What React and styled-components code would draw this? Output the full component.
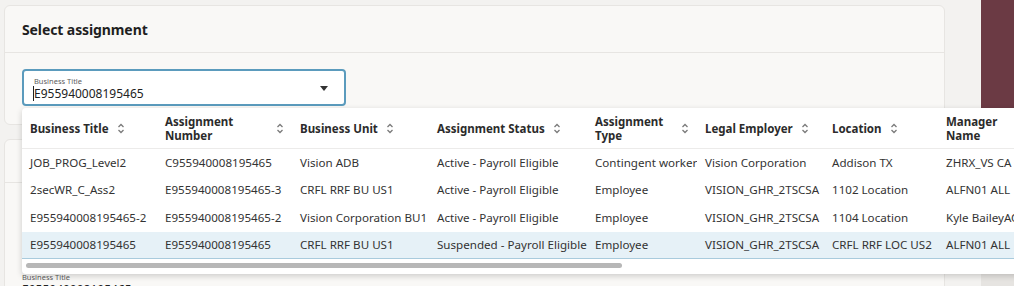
import React from 'react';
import styled, { createGlobalStyle } from 'styled-components';

const GlobalStyle = createGlobalStyle`
    html, body {
        margin: 0;
        padding: 0;
        width: 1014px;
        height: 286px;
        overflow: hidden;
        background: #f3f2f0;
        font-family: "Noto Sans", "Open Sans", sans-serif;
        color: #2b2b2b;
    }
`;

const Page = styled.div`
    display: flex;
    align-items: flex-start;
    height: 286px;
    overflow: hidden;
`;

const Main = styled.div`
    width: 941px;
    margin-left: 4px;
    padding-top: 5px;
    display: flex;
    flex-direction: column;
    gap: 14px;
`;

const SideRail = styled.div`
    margin-left: 36px;
    width: 33px;
    height: 286px;
    display: flex;
    flex-direction: column;
    justify-content: space-between;
`;

const RailBlock = styled.div`
    height: ${p => p.$h}px;
    background: ${p => p.$bg};
`;

const Card = styled.section`
    background: #f9f8f6;
    border: 1px solid #e7e5e2;
    border-radius: 6px;
    min-height: ${p => p.$minH || 0}px;
`;

const CardHeader = styled.header`
    height: ${p => p.$h}px;
    display: flex;
    align-items: center;
    padding: 0 17px;
    border-bottom: 1px solid #e7e5e2;
`;

const Title = styled.h2`
    margin: 0;
    font-size: 14px;
    font-weight: 700;
    color: #1f1f1f;
    letter-spacing: -0.1px;
`;

const CardBody = styled.div`
    padding: ${p => p.$pad};
    display: flex;
    flex-direction: column;
    align-items: flex-start;
`;

const SelectWrap = styled.div`
    position: relative;
    width: 324px;
`;

const SelectBox = styled.div`
    box-sizing: border-box;
    height: 37px;
    border: 2px solid #5b9bbd;
    border-radius: 4px;
    background: #fff;
    display: flex;
    align-items: center;
    padding: 2px 16px 0 10px;
`;

const SelectText = styled.div`
    flex: 1;
    display: flex;
    flex-direction: column;
`;

const SmallLabel = styled.span`
    font-size: 7.5px;
    color: #5c5c5c;
    line-height: 10px;
`;

const Value = styled.span`
    font-size: 12px;
    color: #222;
    line-height: 15px;
    border-left: ${p => (p.$caret ? '1px solid #222' : 'none')};
    margin-left: ${p => (p.$caret ? '-1px' : '0')};
`;

const Popup = styled.div`
    position: absolute;
    top: 39px;
    left: 0;
    width: 1010px;
    background: #fff;
    border-radius: 4px;
    box-shadow: 0 2px 6px rgba(0, 0, 0, 0.18);
    padding-top: 1px;
    padding-bottom: 6px;
    z-index: 10;
`;

const Table = styled.table`
    width: 1010px;
    border-collapse: collapse;
    table-layout: fixed;
    font-size: 11.6px;
`;

const HeadCell = styled.th`
    height: 39px;
    padding: 0 8px;
    text-align: left;
    font-weight: 700;
    font-size: 11.5px;
    color: #2b2b2b;
    border-bottom: 1px solid #ecebea;
    line-height: 14px;
`;

const HeadInner = styled.div`
    display: flex;
    align-items: center;
    gap: 8px;
`;

const HeadLabel = styled.span`
    flex: ${p => (p.$wrap ? 1 : '0 1 auto')};
`;

const Row = styled.tr`
    background: ${p => (p.$selected ? '#e6f1f7' : '#fff')};
    border-top: 1px solid ${p => (p.$selected ? '#a9cbdd' : '#f0efee')};
    border-bottom: 1px solid ${p => (p.$selected ? '#a9cbdd' : 'transparent')};
`;

const Cell = styled.td`
    height: 26.5px;
    padding: 0 3px 0 8px;
    white-space: nowrap;
    overflow: hidden;
    color: #333;
`;

const ScrollTrack = styled.div`
    margin: 4px 0 0 4px;
    height: 5px;
    width: 596px;
    border-radius: 3px;
    background: #b7b7b7;
`;

function SortIcon() {
    return (
        <svg width="8" height="11" viewBox="0 0 8 11" fill="none" stroke="#7a7a7a" strokeWidth="1.3" style={{ flexShrink: 0 }}>
            <path d="M1.5 4 L4 1.5 L6.5 4" />
            <path d="M1.5 7 L4 9.5 L6.5 7" />
        </svg>
    );
}

function Caret() {
    return (
        <svg width="8" height="5" viewBox="0 0 8 5">
            <path d="M0 0 H8 L4 5 Z" fill="#333" />
        </svg>
    );
}

const columns = [
    { label: 'Business Title', w: 135 },
    { label: 'Assignment Number', w: 135, wrap: true },
    { label: 'Business Unit', w: 137 },
    { label: 'Assignment Status', w: 158 },
    { label: 'Assignment Type', w: 110, wrap: true },
    { label: 'Legal Employer', w: 127 },
    { label: 'Location', w: 114 },
    { label: 'Manager Name', w: 94, wrap: true, noSort: true },
];

const rows = [
    ['JOB_PROG_Level2', 'C955940008195465', 'Vision ADB', 'Active - Payroll Eligible', 'Contingent worker', 'Vision Corporation', 'Addison TX', 'ZHRX_VS CA'],
    ['2secWR_C_Ass2', 'E955940008195465-3', 'CRFL RRF BU US1', 'Active - Payroll Eligible', 'Employee', 'VISION_GHR_2TSCSA', '1102 Location', 'ALFN01 ALL'],
    ['E955940008195465-2', 'E955940008195465-2', 'Vision Corporation BU1', 'Active - Payroll Eligible', 'Employee', 'VISION_GHR_2TSCSA', '1104 Location', 'Kyle BaileyAC'],
    ['E955940008195465', 'E955940008195465', 'CRFL RRF BU US1', 'Suspended - Payroll Eligible', 'Employee', 'VISION_GHR_2TSCSA', 'CRFL RRF LOC US2', 'ALFN01 ALL'],
];

export default function App() {
    return (
        <>
            <GlobalStyle />
            <Page>
                <Main>
                    <Card $minH={118}>
                        <CardHeader $h={46}>
                            <Title>Select assignment</Title>
                        </CardHeader>
                        <CardBody $pad="16px 17px 0">
                            <SelectWrap>
                                <SelectBox>
                                    <SelectText>
                                        <SmallLabel>Business Title</SmallLabel>
                                        <Value $caret>E955940008195465</Value>
                                    </SelectText>
                                    <Caret />
                                </SelectBox>
                                <Popup>
                                    <Table>
                                        <colgroup>
                                            {columns.map(c => <col key={c.label} style={{ width: c.w }} />)}
                                        </colgroup>
                                        <thead>
                                            <tr>
                                                {columns.map(c => (
                                                    <HeadCell key={c.label}>
                                                        <HeadInner>
                                                            <HeadLabel $wrap={c.wrap}>{c.label}</HeadLabel>
                                                            {!c.noSort && <SortIcon />}
                                                        </HeadInner>
                                                    </HeadCell>
                                                ))}
                                            </tr>
                                        </thead>
                                        <tbody>
                                            {rows.map((r, i) => (
                                                <Row key={i} $selected={i === rows.length - 1}>
                                                    {r.map((v, j) => <Cell key={j}>{v}</Cell>)}
                                                </Row>
                                            ))}
                                        </tbody>
                                    </Table>
                                    <ScrollTrack />
                                </Popup>
                            </SelectWrap>
                        </CardBody>
                    </Card>
                    <Card $minH={160}>
                        <CardHeader $h={42} />
                        <CardBody $pad="89px 17px 0">
                            <SmallLabel>Business Title</SmallLabel>
                            <Value>E955940008195465</Value>
                        </CardBody>
                    </Card>
                </Main>
                <SideRail>
                    <RailBlock $h={108} $bg="#6b3a44" />
                    <RailBlock $h={16} $bg="#e6e4e1" />
                </SideRail>
            </Page>
        </>
    );
}
